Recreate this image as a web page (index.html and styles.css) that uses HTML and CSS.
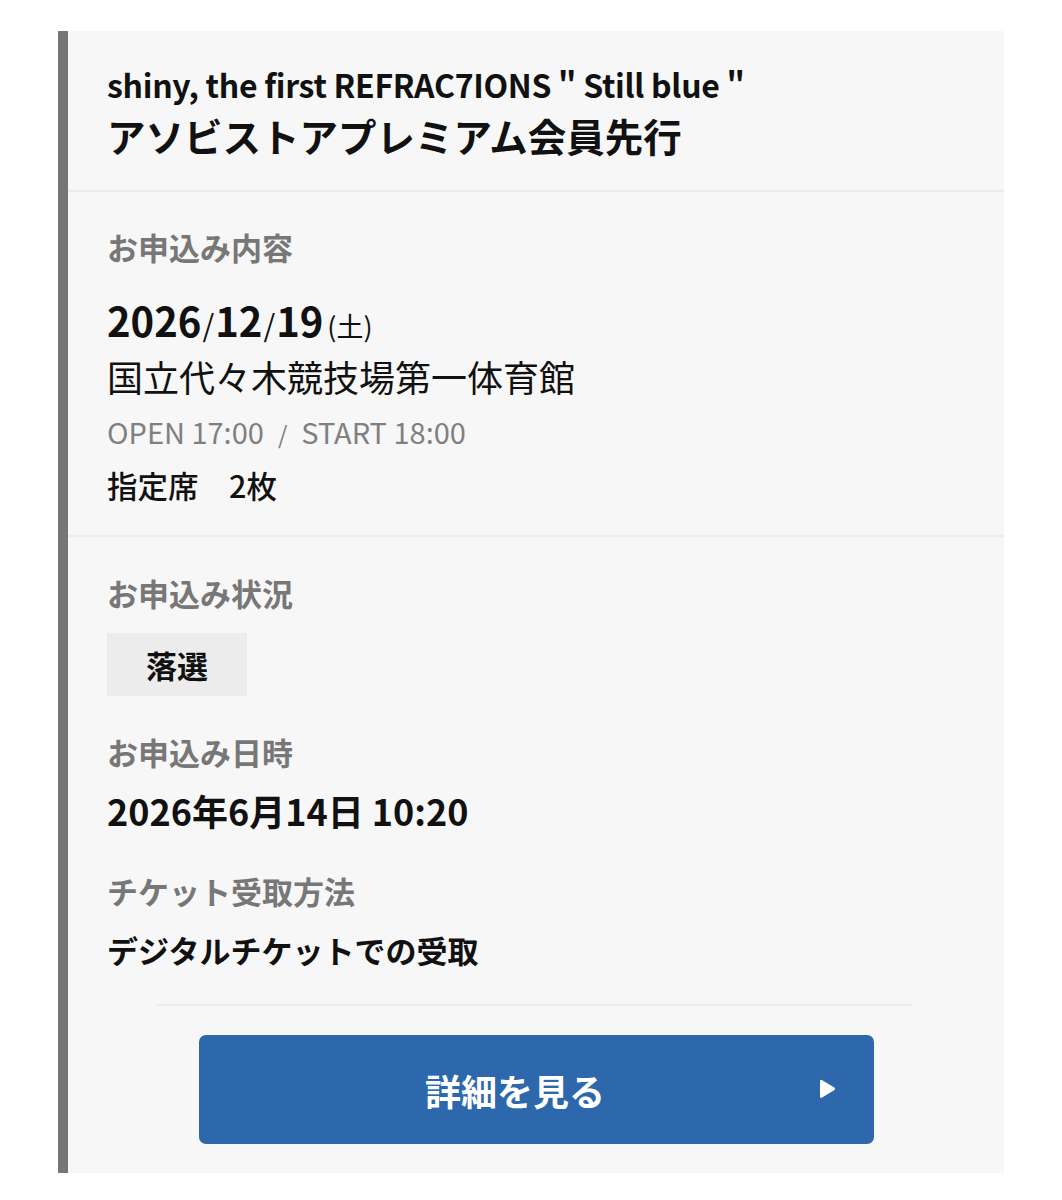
FILE: index.html
```html
<!DOCTYPE html>
<html lang="ja">
<head>
<meta charset="utf-8">
<link rel="stylesheet" href="styles.css">
</head>
<body>
<div class="card">
  <div class="header">
    <div class="title-en">shiny, the first REFRAC7IONS " Still blue "</div>
    <div class="title-ja">アソビストアプレミアム会員先行</div>
  </div>
  <div class="section detail">
    <div class="label">お申込み内容</div>
    <div class="date">2026<span class="slash">/</span>12<span class="slash">/</span>19<span class="dow">(土)</span></div>
    <div class="venue">国立代々木競技場第一体育館</div>
    <div class="time">OPEN 17:00<span class="sep">/</span>START 18:00</div>
    <div class="seat">指定席　2枚</div>
  </div>
  <div class="section status">
    <div class="label">お申込み状況</div>
    <div class="badge">落選</div>
    <div class="label label-gap">お申込み日時</div>
    <div class="value applied">2026年6月14日 10:20</div>
    <div class="label label-gap">チケット受取方法</div>
    <div class="value method">デジタルチケットでの受取</div>
    <div class="rule"></div>
    <a class="button" href="#"><span class="btn-text">詳細を見る</span>
      <svg class="arrow" viewBox="0 0 20 22" width="20" height="22"><path d="M3 3.5 Q3 1 5.2 2.2 L17 9.3 Q19 10.8 17 12.3 L5.2 19.6 Q3 20.8 3 18.3 Z" fill="#fff"/></svg>
    </a>
  </div>
</div>
</body>
</html>
```

FILE: styles.css
```css
* { box-sizing: border-box; }
html, body { margin: 0; padding: 0; background: #fff; }
body {
  padding: 31px 58px 0 58px;
  font-family: "Noto Sans CJK JP", "Noto Sans", sans-serif;
  color: #111;
}
.card {
  width: 946px;
  background: #f7f7f7;
  border-left: 10px solid #767676;
}
.header {
  padding: 28px 39px 29px;
  border-bottom: 2px solid #ebebeb;
}
.title-en {
  font-size: 32px;
  font-weight: 700;
  line-height: 50px;
  letter-spacing: -0.3px;
}
.title-ja {
  font-size: 38.5px;
  font-weight: 700;
  line-height: 52px;
}
.section { padding-left: 39px; padding-right: 39px; }
.detail {
  padding-top: 33px;
  padding-bottom: 28px;
  border-bottom: 2px solid #ebebeb;
}
.label {
  font-size: 31px;
  font-weight: 700;
  color: #777;
  line-height: 44px;
}
.date {
  margin-top: 25px;
  font-size: 40px;
  font-weight: 700;
  line-height: 52px;
  height: 52px;
}
.date .slash { font-weight: 400; font-size: 30px; margin: 0 1px; line-height: 1; }
.date .dow { font-weight: 400; font-size: 27px; margin-left: 4px; line-height: 1; }
.venue {
  margin-top: 5px;
  font-size: 36px;
  font-weight: 400;
  line-height: 50px;
  height: 50px;
}
.time {
  margin-top: 10px;
  font-size: 29px;
  color: #808080;
  line-height: 40px;
  height: 40px;
}
.time .sep { margin: 0 14px; font-size: 24px; line-height: 1; }
.seat {
  margin-top: 12px;
  font-size: 30.5px;
  font-weight: 500;
  line-height: 44px;
  height: 44px;
}
.status {
  padding-top: 34px;
  padding-bottom: 29px;
}
.badge {
  margin-top: 18px;
  width: 140px;
  height: 63px;
  background: #ececec;
  font-size: 31px;
  font-weight: 700;
  display: flex;
  align-items: center;
  justify-content: center;
}
.label-gap { margin-top: 34px; }
.value {
  font-weight: 700;
  line-height: 44px;
}
.applied {
  margin-top: 11px;
  font-size: 36px;
  line-height: 50px;
  height: 50px;
}
.method {
  margin-top: 15px;
  font-size: 31px;
  height: 44px;
}
.rule {
  margin: 32px auto 0;
  width: 755px;
  height: 2px;
  background: #ebebeb;
  position: relative;
  left: -2px;
}
.button {
  position: relative;
  margin: 29px auto 0;
  width: 675px;
  height: 109px;
  background: #2d67ac;
  border-radius: 7px;
  color: #fff;
  text-decoration: none;
  font-size: 36px;
  font-weight: 700;
  display: flex;
  align-items: center;
  justify-content: center;
  padding-right: 42px;
}
.arrow {
  position: absolute;
  right: 37px;
  top: 43px;
}
```
